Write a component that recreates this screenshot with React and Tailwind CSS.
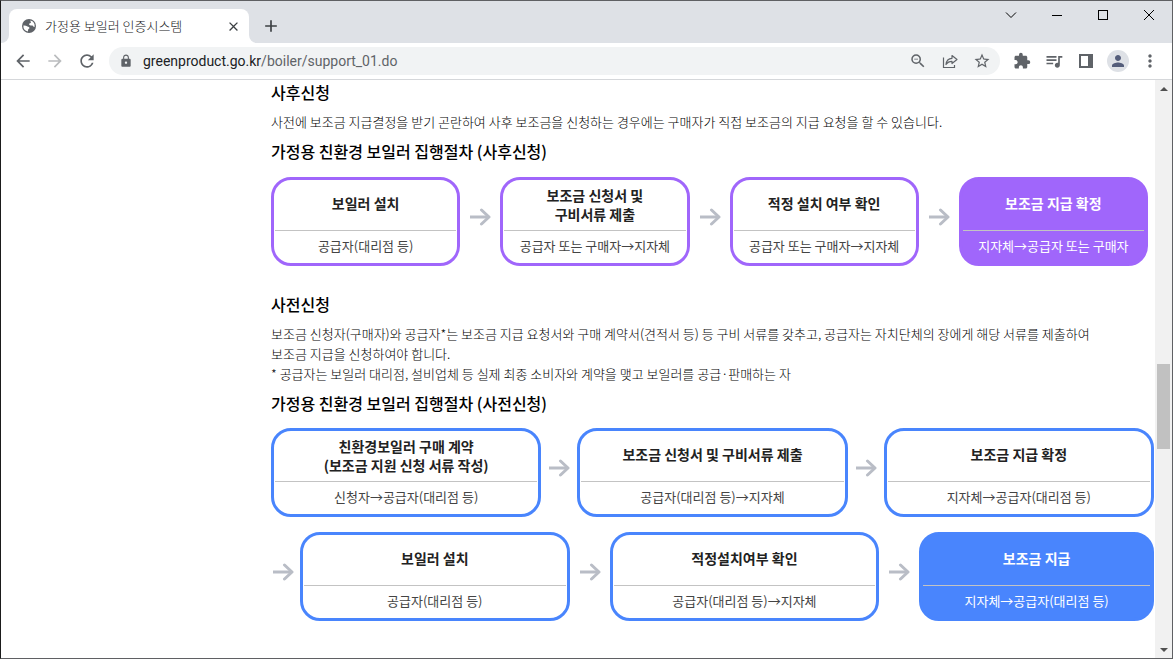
import {
  MdArrowBack,
  MdArrowForward,
  MdRefresh,
  MdLock,
  MdZoomOut,
  MdStarBorder,
  MdExtension,
  MdQueueMusic,
  MdPerson,
  MdMoreVert,
  MdClose,
  MdAdd,
} from "react-icons/md";

const POST_STEPS = [
  { title: ["보일러 설치"], actor: "공급자(대리점 등)" },
  { title: ["보조금 신청서 및", "구비서류 제출"], actor: "공급자 또는 구매자→지자체" },
  { title: ["적정 설치 여부 확인"], actor: "공급자 또는 구매자→지자체" },
  { title: ["보조금 지급 확정"], actor: "지자체→공급자 또는 구매자", final: true },
];

const PRE_STEPS_TOP = [
  { title: ["친환경보일러 구매 계약", "(보조금 지원 신청 서류 작성)"], actor: "신청자→공급자(대리점 등)" },
  { title: ["보조금 신청서 및 구비서류 제출"], actor: "공급자(대리점 등)→지자체" },
  { title: ["보조금 지급 확정"], actor: "지자체→공급자(대리점 등)" },
];

const PRE_STEPS_BOTTOM = [
  { title: ["보일러 설치"], actor: "공급자(대리점 등)" },
  { title: ["적정설치여부 확인"], actor: "공급자(대리점 등)→지자체" },
  { title: ["보조금 지급"], actor: "지자체→공급자(대리점 등)", final: true, narrow: true },
];

const THEMES = {
  purple: { outline: "border-[#a066fb] bg-white", filled: "border-[#a066fb] bg-[#a066fb]" },
  blue: { outline: "border-[#4985fd] bg-white", filled: "border-[#4985fd] bg-[#4985fd]" },
};

function GlobeIcon() {
  return (
    <svg viewBox="0 0 16 16" className="size-4 shrink-0" aria-hidden="true">
      <circle cx="8" cy="8" r="7" fill="#5f6368" />
      <path
        d="M2.4 7.6c1.6-.2 3 .2 4.1 1 .9.6 1.9.5 2 1.4 0 .8-1.3.8-1.4 1.7l-.1 1.9A5.7 5.7 0 0 1 2.4 7.6zM9.4 2.5a5.7 5.7 0 0 1 4.2 6.2c-.6.4-1.3.2-1.6-.6-.4-1-1.4-.5-2.3-.6-1-.2-1.7-.7-1.6-1.5.1-.9 1.7-.5 1.8-1.5.1-.7-.7-1-.5-2z"
        fill="#fff"
      />
    </svg>
  );
}

function ShareIcon() {
  return (
    <svg viewBox="0 0 16 16" className="size-4" fill="none" stroke="currentColor" strokeWidth="1.2" aria-hidden="true">
      <path d="M1.5 4.500v10h11V12" />
      <path d="M4 11.500c.4-4 2.500-6 6-6.200V2.500L15 6.500l-5 4V8.300c-2.600 0-4.500.9-6 3.200z" strokeLinejoin="round" />
    </svg>
  );
}

function SidePanelIcon() {
  return (
    <svg viewBox="0 0 14 14" className="size-3.5" aria-hidden="true">
      <path fillRule="evenodd" fill="currentColor" d="M0 0h14v14H0zM2 2v10h7V2z" />
    </svg>
  );
}

function ArrowIcon() {
  return (
    <svg viewBox="0 0 22 20" className="h-5 w-[22px]" fill="none" stroke="#b9bdc6" strokeWidth="3" aria-hidden="true">
      <path d="M1 10h18" />
      <path d="M12.500 3l7.500 7-7.500 7" strokeLinecap="round" strokeLinejoin="round" />
    </svg>
  );
}

function ToolButton({ label, className = "", children }) {
  return (
    <button type="button" aria-label={label} className={`flex size-8 shrink-0 items-center justify-center ${className}`}>
      {children}
    </button>
  );
}

function TabStrip() {
  return (
    <div className="flex h-[42px] items-end bg-[#dee1e6]">
      {/* curved feet on both sides of the active tab */}
      <span className="size-2 bg-white">
        <span className="block size-2 rounded-br-lg bg-[#dee1e6]" />
      </span>
      <div className="flex h-[34px] w-60 items-center rounded-t-lg bg-white pr-2 pl-3">
        <GlobeIcon />
        <span className="ml-2 flex-1 truncate text-[13px] font-light text-[#202124]">가정용 보일러 인증시스템</span>
        <button type="button" aria-label="탭 닫기" className="flex size-4 items-center justify-center text-[#3c4043]">
          <MdClose size={15} />
        </button>
      </div>
      <span className="size-2 bg-white">
        <span className="block size-2 rounded-bl-lg bg-[#dee1e6]" />
      </span>
      <button type="button" aria-label="새 탭" className="flex size-7 items-center justify-center self-center pt-2 text-[#3c4043]">
        <MdAdd size={20} className="shrink-0" />
      </button>
      <div className="ml-auto flex self-start text-black">
        <button type="button" aria-label="탭 검색" className="flex h-7 w-[46px] items-center justify-center">
          <svg viewBox="0 0 12 12" className="size-3" fill="none" stroke="currentColor">
            <path d="M1 3.500l5 5 5-5" />
          </svg>
        </button>
        <button type="button" aria-label="최소화" className="flex h-7 w-[46px] items-center justify-center">
          <span className="h-px w-2.5 bg-black" />
        </button>
        <button type="button" aria-label="최대화" className="flex h-7 w-[46px] items-center justify-center">
          <span className="size-2.5 border border-black" />
        </button>
        <button type="button" aria-label="닫기" className="flex h-7 w-[46px] items-center justify-center">
          <svg viewBox="0 0 12 12" className="size-3" fill="none" stroke="currentColor">
            <path d="M1 1l10 10M11 1L1 11" />
          </svg>
        </button>
      </div>
    </div>
  );
}

function Toolbar() {
  return (
    <div className="flex h-[37px] items-center border-b border-[#d5d7da] bg-white pr-1.5 pl-1.5 text-[#5f6368]">
      <ToolButton label="뒤로">
        <MdArrowBack size={20} />
      </ToolButton>
      <ToolButton label="앞으로" className="text-[#babcbe]">
        <MdArrowForward size={20} />
      </ToolButton>
      <ToolButton label="새로고침">
        <MdRefresh size={20} />
      </ToolButton>
      <div className="ml-1.5 flex h-7 flex-1 items-center rounded-full bg-[#f1f3f4] pr-0.5 pl-2.5">
        <MdLock size={14} />
        <a href="#" className="ml-2.5 flex-1 font-[Roboto,'Noto_Sans_CJK_KR',sans-serif] text-sm text-[#5f6368]">
          <span className="text-[#202124]">greenproduct.go.kr</span>/boiler/support_01.do
        </a>
        <ToolButton label="축소">
          <MdZoomOut size={18} />
        </ToolButton>
        <ToolButton label="공유">
          <ShareIcon />
        </ToolButton>
        <ToolButton label="북마크">
          <MdStarBorder size={18} />
        </ToolButton>
      </div>
      <ToolButton label="확장 프로그램" className="ml-1.5">
        <MdExtension size={18} />
      </ToolButton>
      <ToolButton label="미디어 제어">
        <MdQueueMusic size={20} />
      </ToolButton>
      <ToolButton label="측면 패널">
        <SidePanelIcon />
      </ToolButton>
      <ToolButton label="프로필">
        <span className="flex size-[22px] items-center justify-center rounded-full bg-[#dee1e6] text-[#545d7a]">
          <MdPerson size={18} />
        </span>
      </ToolButton>
      <ToolButton label="메뉴">
        <MdMoreVert size={20} />
      </ToolButton>
    </div>
  );
}

function StepCard({ step, theme }) {
  const look = step.final ? THEMES[theme].filled : THEMES[theme].outline;
  const grow = step.narrow ? "grow-[234]" : "grow-[270]";

  return (
    <li className={`flex h-[89px] min-w-0 basis-0 flex-col rounded-[20px] border-3 px-px text-center ${grow} ${look}`}>
      <strong
        className={`flex h-[50px] flex-col justify-center text-sm leading-[19px] font-bold ${
          step.title.length === 1 ? "pb-1" : ""
        } ${step.final ? "text-white" : "text-[#222]"}`}
      >
        {step.title.map((line) => (
          <span key={line}>{line}</span>
        ))}
      </strong>
      <span
        className={`flex-1 border-t border-[#c3c3c3] text-[13px] leading-[30px] whitespace-nowrap ${
          step.final ? "text-white" : "text-[#444]"
        }`}
      >
        {step.actor}
      </span>
    </li>
  );
}

function StepArrow({ className = "w-10" }) {
  return (
    <li aria-hidden="true" className={`flex shrink-0 items-center justify-center pb-[9px] ${className}`}>
      <ArrowIcon />
    </li>
  );
}

function StepRow({ steps, theme, arrow, leading = false, className = "" }) {
  return (
    <ol className={`flex ${className}`}>
      {leading && <StepArrow className="w-[29px] pr-1.5" />}
      {steps.map((step, i) => [
        i > 0 && <StepArrow key={`arrow-${i}`} className={arrow} />,
        <StepCard key={step.actor + i} step={step} theme={theme} />,
      ])}
    </ol>
  );
}

function Scrollbar() {
  return (
    <div className="flex w-[17px] shrink-0 flex-col items-center bg-[#f1f1f1]">
      <button type="button" aria-label="위로 스크롤" className="flex h-[17px] w-full items-center justify-center">
        <span className="border-x-4 border-b-4 border-x-transparent border-b-[#505050]" />
      </button>
      <div className="grow-[267]" />
      <div className="h-[85px] w-[13px] bg-[#c1c1c1]" />
      <div className="grow-[192]" />
      <button type="button" aria-label="아래로 스크롤" className="flex h-[17px] w-full items-center justify-center">
        <span className="border-x-4 border-t-4 border-x-transparent border-t-[#505050]" />
      </button>
    </div>
  );
}

export default function App() {
  return (
    <div className="flex min-h-screen flex-col border border-[#5f6063] border-l-[#1b1b1b] bg-white font-['Noto_Sans_CJK_KR',sans-serif]">
      <TabStrip />
      <Toolbar />
      <div className="flex flex-1">
        <main className="min-w-0 flex-1 pr-px pl-[270px] text-black">
          <section>
            <h2 className="text-base leading-6 font-medium">사후신청</h2>
            <p className="mt-2 text-[13px] leading-5 font-light">
              사전에 보조금 지급결정을 받기 곤란하여 사후 보조금을 신청하는 경우에는 구매자가 직접 보조금의 지급 요청을 할 수 있습니다.
            </p>
            <h3 className="mt-[7px] text-base leading-6 font-medium">가정용 친환경 보일러 집행절차 (사후신청)</h3>
            <StepRow steps={POST_STEPS} theme="purple" arrow="w-10" className="mt-3.5 pr-1.5" />
          </section>

          <section className="mt-[26px]">
            <h2 className="text-base leading-6 font-medium">사전신청</h2>
            <p className="mt-2 text-[13px] leading-5 font-light">
              보조금 신청자(구매자)와 공급자*는 보조금 지급 요청서와 구매 계약서(견적서 등) 등 구비 서류를 갖추고, 공급자는 자치단체의 장에게 해당 서류를 제출하여
              <br />
              보조금 지급을 신청하여야 합니다.
              <br />* 공급자는 보일러 대리점, 설비업체 등 실제 최종 소비자와 계약을 맺고 보일러를 공급·판매하는 자
            </p>
            <h3 className="mt-[7px] text-base leading-6 font-medium">가정용 친환경 보일러 집행절차 (사전신청)</h3>
            <StepRow steps={PRE_STEPS_TOP} theme="blue" arrow="w-9" className="mt-[13px]" />
            <StepRow steps={PRE_STEPS_BOTTOM} theme="blue" arrow="w-10" leading className="mt-[15px]" />
          </section>
        </main>
        <Scrollbar />
      </div>
    </div>
  );
}
